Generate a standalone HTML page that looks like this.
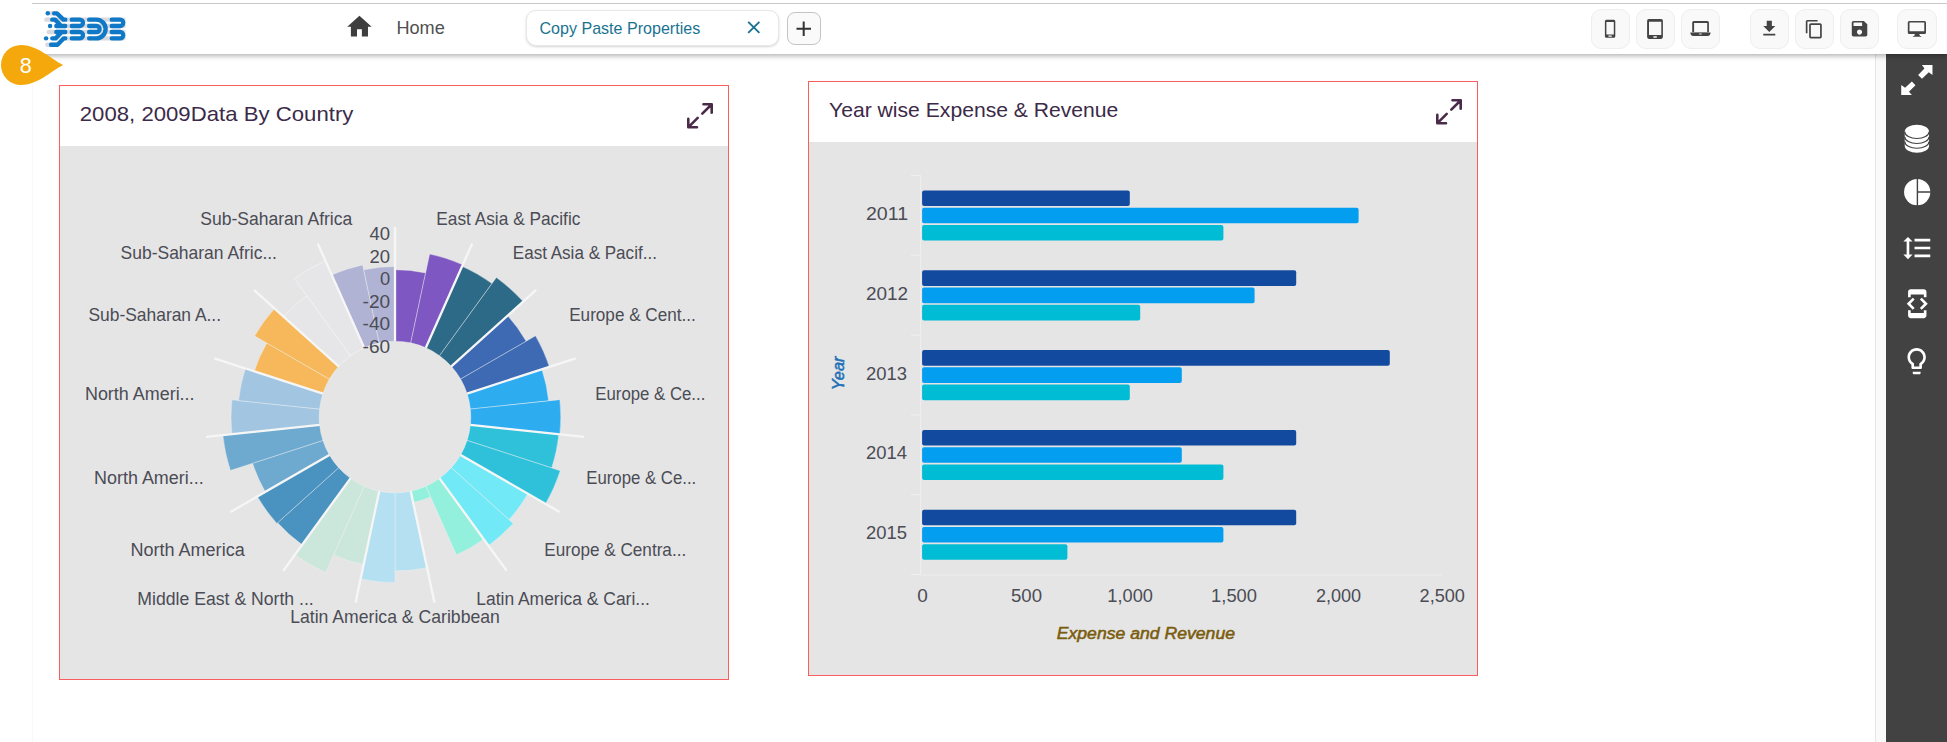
<!DOCTYPE html>
<html lang="en">
<head>
<meta charset="utf-8">
<title>Copy Paste Properties</title>
<style>
html,body{margin:0;padding:0;background:#fff;}
body{width:1947px;height:742px;position:relative;overflow:hidden;font-family:"Liberation Sans",sans-serif;color:#4a4a4a;}
.abs{position:absolute;}
#page{left:32px;top:3px;width:1843px;height:739px;background:#fff;border-left:1px solid #f8f8f8;box-sizing:border-box;}
#hdr{left:32px;top:3px;width:1915px;height:51px;background:#fff;border-top:1px solid #c9c9c9;box-shadow:0 2px 5px rgba(0,0,0,0.30);clip-path:inset(0 0 -12px 0);box-sizing:border-box;}
#scroll{left:1875px;top:54px;width:11px;height:688px;background:#fafafa;border-left:1px solid #e6e6e6;box-sizing:border-box;}
#side{left:1886px;top:54px;width:61px;height:688px;background:#424242;}
.tbtn{position:absolute;top:9px;width:39px;height:39.5px;box-sizing:border-box;border:1px solid #eeeeee;border-radius:10px;background:#f9f9f9;}
.panel{position:absolute;width:670px;height:595px;box-sizing:border-box;border:1px solid #fb5d5d;background:#e5e5e5;}
.panel .ph{position:absolute;left:0;top:0;width:668px;height:60px;background:#fff;}
.ttl{position:absolute;white-space:nowrap;color:#3b2a45;}
svg{position:absolute;left:0;top:0;overflow:visible;}
.pl{font-family:"Liberation Sans",sans-serif;font-size:16.5px;fill:#4b4c55;}
</style>
</head>
<body>
<div id="page" class="abs"></div>

<!-- panels -->
<div class="panel" style="left:59px;top:85px;"><div class="ph"></div></div>
<div class="panel" style="left:808px;top:81px;"><div class="ph"></div></div>

<div id="scroll" class="abs"></div>
<div id="side" class="abs"></div>
<div id="hdr" class="abs"></div>

<!-- header text -->
<div class="abs" id="tab" style="left:526px;top:10px;width:252.5px;height:36px;box-sizing:border-box;border:1px solid #e8e8e8;border-radius:10px;background:#fff;box-shadow:0 1px 2.5px rgba(0,0,0,0.17);"></div>
<div class="abs" id="plus" style="left:787px;top:12px;width:34px;height:33px;box-sizing:border-box;border:1px solid #c4c4c4;border-radius:8px;background:#fafafa;"></div>

<div class="tbtn" style="left:1591px;"></div>
<div class="tbtn" style="left:1636px;"></div>
<div class="tbtn" style="left:1681px;"></div>
<div class="tbtn" style="left:1750px;"></div>
<div class="tbtn" style="left:1795px;"></div>
<div class="tbtn" style="left:1840px;"></div>
<div class="tbtn" style="left:1897px;width:40px;"></div>

<!-- main overlay svg -->
<svg width="1947" height="742" viewBox="0 0 1947 742">
<!-- logo -->
<svg x="38" y="6" width="96" height="46" viewBox="0 0 1549 742" overflow="visible">
 <g fill="none" stroke="#d9d9df" stroke-width="70" stroke-linecap="round">
  <path d="M135 220H1380M175 420H1380M780 322H1380M780 522H1380M150 625H300M200 118H260M420 322H780M420 522H780"/>
 </g>
 <g fill="none" stroke="#0f79c8" stroke-width="70" stroke-linecap="round" stroke-linejoin="round">
  <path d="M260 118H305L410 220H440"/>
  <path d="M230 220H275L375 322H440M295 322H440"/>
  <path d="M295 420H440M380 425L285 522H230"/>
  <path d="M440 522H415L315 625H210"/>
  <path d="M545 220H675A51 51 0 0 1 675 322H545"/>
  <path d="M545 420H675A51 51 0 0 1 675 522H545"/>
  <path d="M825 220H940A151 151 0 0 1 940 522H825"/>
  <path d="M825 322H945A49 49 0 0 1 945 420H825"/>
  <path d="M1190 220H1325A51 51 0 0 1 1325 322H1190"/>
  <path d="M1190 420H1325A51 51 0 0 1 1325 522H1190"/>
 </g>
 <g fill="#0f79c8"><circle cx="158" cy="118" r="36"/><circle cx="195" cy="322" r="36"/><circle cx="130" cy="522" r="36"/></g>
</svg>

<!-- badge 8 -->
<path d="M63 65 C50 58 37 45 21 45 A20 20 0 0 0 21 85 C37 85 50 72 63 65Z" fill="#f5a80c"/>
<text x="25.7" y="72.8" text-anchor="middle" font-family="Liberation Sans, sans-serif" font-size="21.6" fill="#fff">8</text>

<!-- home icon -->
<g transform="translate(344.8,12.1) scale(1.22)" fill="#3e3e3e"><path d="M10 20v-6h4v6h5v-8h3L12 3 2 12h3v8z"/></g>
<!-- tab close -->
<path d="M748.2 21.8L759.4 32.9M759.4 21.8L748.2 32.9" stroke="#1a7391" stroke-width="1.9" fill="none"/>
<!-- plus -->
<path d="M796.5 28.8H811M803.7 21.6V36" stroke="#333" stroke-width="2" fill="none"/>

<!-- expand icons -->
<g fill="none" stroke="#4a2c4a" stroke-width="2.6" stroke-linecap="round" stroke-linejoin="round" id="exp1">
 <path d="M703.5 104.3H711.7V112.8M711 105L702.3 113.7M688.3 118.9V127.3H697M689 126.6L697.7 117.9"/>
</g>
<g fill="none" stroke="#4a2c4a" stroke-width="2.6" stroke-linecap="round" stroke-linejoin="round" transform="translate(749,-4)">
 <path d="M703.5 104.3H711.7V112.8M711 105L702.3 113.7M688.3 118.9V127.3H697M689 126.6L697.7 117.9"/>
</g>

<!-- polar chart -->
<g id="polar">
<path d="M395.00 341.20L395.00 269.70A147.30 147.30 0 0 1 425.63 272.92L410.76 342.86A75.80 75.80 0 0 0 395.00 341.20Z" fill="#7e57c2" stroke="#f4f4f4" stroke-opacity="0.55" stroke-width="0.7"/>
<path d="M410.76 342.86L429.66 253.94A166.70 166.70 0 0 1 462.80 264.71L425.83 347.75A75.80 75.80 0 0 0 410.76 342.86Z" fill="#7e57c2" stroke="#f4f4f4" stroke-opacity="0.55" stroke-width="0.7"/>
<path d="M425.83 347.75L462.11 266.26A165.00 165.00 0 0 1 491.98 283.51L439.55 355.68A75.80 75.80 0 0 0 425.83 347.75Z" fill="#2d6a88" stroke="#f4f4f4" stroke-opacity="0.55" stroke-width="0.7"/>
<path d="M439.55 355.68L496.39 277.44A172.50 172.50 0 0 1 523.19 301.57L451.33 366.28A75.80 75.80 0 0 0 439.55 355.68Z" fill="#2d6a88" stroke="#f4f4f4" stroke-opacity="0.55" stroke-width="0.7"/>
<path d="M451.33 366.28L507.59 315.63A151.50 151.50 0 0 1 526.20 341.25L460.64 379.10A75.80 75.80 0 0 0 451.33 366.28Z" fill="#3d6ab3" stroke="#f4f4f4" stroke-opacity="0.55" stroke-width="0.7"/>
<path d="M460.64 379.10L535.56 335.85A162.30 162.30 0 0 1 549.36 366.85L467.09 393.58A75.80 75.80 0 0 0 460.64 379.10Z" fill="#3d6ab3" stroke="#f4f4f4" stroke-opacity="0.55" stroke-width="0.7"/>
<path d="M467.09 393.58L541.94 369.26A154.50 154.50 0 0 1 548.65 400.85L470.38 409.08A75.80 75.80 0 0 0 467.09 393.58Z" fill="#2eacf0" stroke="#f4f4f4" stroke-opacity="0.55" stroke-width="0.7"/>
<path d="M470.38 409.08L559.89 399.67A165.80 165.80 0 0 1 559.89 434.33L470.38 424.92A75.80 75.80 0 0 0 470.38 409.08Z" fill="#2eacf0" stroke="#f4f4f4" stroke-opacity="0.55" stroke-width="0.7"/>
<path d="M470.38 424.92L558.90 434.23A164.80 164.80 0 0 1 551.73 467.93L467.09 440.42A75.80 75.80 0 0 0 470.38 424.92Z" fill="#2fc1da" stroke="#f4f4f4" stroke-opacity="0.55" stroke-width="0.7"/>
<path d="M467.09 440.42L560.29 470.71A173.80 173.80 0 0 1 545.52 503.90L460.64 454.90A75.80 75.80 0 0 0 467.09 440.42Z" fill="#2fc1da" stroke="#f4f4f4" stroke-opacity="0.55" stroke-width="0.7"/>
<path d="M460.64 454.90L527.93 493.75A153.50 153.50 0 0 1 509.07 519.71L451.33 467.72A75.80 75.80 0 0 0 460.64 454.90Z" fill="#72e9f6" stroke="#f4f4f4" stroke-opacity="0.55" stroke-width="0.7"/>
<path d="M451.33 467.72L513.16 523.39A159.00 159.00 0 0 1 488.46 545.63L439.55 478.32A75.80 75.80 0 0 0 451.33 467.72Z" fill="#72e9f6" stroke="#f4f4f4" stroke-opacity="0.55" stroke-width="0.7"/>
<path d="M439.55 478.32L483.76 539.16A151.00 151.00 0 0 1 456.42 554.95L425.83 486.25A75.80 75.80 0 0 0 439.55 478.32Z" fill="#93f0dc" stroke="#f4f4f4" stroke-opacity="0.55" stroke-width="0.7"/>
<path d="M425.83 486.25L430.59 496.94A87.50 87.50 0 0 1 413.19 502.59L410.76 491.14A75.80 75.80 0 0 0 425.83 486.25Z" fill="#93f0dc" stroke="#f4f4f4" stroke-opacity="0.55" stroke-width="0.7"/>
<path d="M410.76 491.14L427.02 567.63A154.00 154.00 0 0 1 395.00 571.00L395.00 492.80A75.80 75.80 0 0 0 410.76 491.14Z" fill="#b5e0f2" stroke="#f4f4f4" stroke-opacity="0.55" stroke-width="0.7"/>
<path d="M395.00 492.80L395.00 582.50A165.50 165.50 0 0 1 360.59 578.88L379.24 491.14A75.80 75.80 0 0 0 395.00 492.80Z" fill="#b5e0f2" stroke="#f4f4f4" stroke-opacity="0.55" stroke-width="0.7"/>
<path d="M379.24 491.14L363.61 564.70A151.00 151.00 0 0 1 333.58 554.95L364.17 486.25A75.80 75.80 0 0 0 379.24 491.14Z" fill="#cbe6db" stroke="#f4f4f4" stroke-opacity="0.55" stroke-width="0.7"/>
<path d="M364.17 486.25L325.73 572.58A170.30 170.30 0 0 1 294.90 554.78L350.45 478.32A75.80 75.80 0 0 0 364.17 486.25Z" fill="#cbe6db" stroke="#f4f4f4" stroke-opacity="0.55" stroke-width="0.7"/>
<path d="M350.45 478.32L302.13 544.82A158.00 158.00 0 0 1 277.58 522.72L338.67 467.72A75.80 75.80 0 0 0 350.45 478.32Z" fill="#4a93c0" stroke="#f4f4f4" stroke-opacity="0.55" stroke-width="0.7"/>
<path d="M338.67 467.72L276.84 523.39A159.00 159.00 0 0 1 257.30 496.50L329.36 454.90A75.80 75.80 0 0 0 338.67 467.72Z" fill="#4a93c0" stroke="#f4f4f4" stroke-opacity="0.55" stroke-width="0.7"/>
<path d="M329.36 454.90L265.27 491.90A149.80 149.80 0 0 1 252.53 463.29L322.91 440.42A75.80 75.80 0 0 0 329.36 454.90Z" fill="#6ea9d0" stroke="#f4f4f4" stroke-opacity="0.55" stroke-width="0.7"/>
<path d="M322.91 440.42L230.37 470.49A173.10 173.10 0 0 1 222.85 435.09L319.62 424.92A75.80 75.80 0 0 0 322.91 440.42Z" fill="#6ea9d0" stroke="#f4f4f4" stroke-opacity="0.55" stroke-width="0.7"/>
<path d="M319.62 424.92L231.90 434.14A164.00 164.00 0 0 1 231.90 399.86L319.62 409.08A75.80 75.80 0 0 0 319.62 424.92Z" fill="#a2c6e2" stroke="#f4f4f4" stroke-opacity="0.55" stroke-width="0.7"/>
<path d="M319.62 409.08L238.56 400.56A157.30 157.30 0 0 1 245.40 368.39L322.91 393.58A75.80 75.80 0 0 0 319.62 409.08Z" fill="#a2c6e2" stroke="#f4f4f4" stroke-opacity="0.55" stroke-width="0.7"/>
<path d="M322.91 393.58L254.24 371.27A148.00 148.00 0 0 1 266.83 343.00L329.36 379.10A75.80 75.80 0 0 0 322.91 393.58Z" fill="#f6b85a" stroke="#f4f4f4" stroke-opacity="0.55" stroke-width="0.7"/>
<path d="M329.36 379.10L254.70 336.00A162.00 162.00 0 0 1 274.61 308.60L338.67 366.28A75.80 75.80 0 0 0 329.36 379.10Z" fill="#f6b85a" stroke="#f4f4f4" stroke-opacity="0.55" stroke-width="0.7"/>
<path d="M338.67 366.28L283.53 316.63A150.00 150.00 0 0 1 306.83 295.65L350.45 355.68A75.80 75.80 0 0 0 338.67 366.28Z" fill="#e6e6e8" stroke="#f4f4f4" stroke-opacity="0.75" stroke-width="1.0"/>
<path d="M350.45 355.68L294.49 278.66A171.00 171.00 0 0 1 325.45 260.78L364.17 347.75A75.80 75.80 0 0 0 350.45 355.68Z" fill="#e6e6e8" stroke="#f4f4f4" stroke-opacity="0.75" stroke-width="1.0"/>
<path d="M364.17 347.75L331.75 274.94A155.50 155.50 0 0 1 362.67 264.90L379.24 342.86A75.80 75.80 0 0 0 364.17 347.75Z" fill="#b0b3d3" stroke="#f4f4f4" stroke-opacity="0.55" stroke-width="0.7"/>
<path d="M379.24 342.86L363.71 269.79A150.50 150.50 0 0 1 395.00 266.50L395.00 341.20A75.80 75.80 0 0 0 379.24 342.86Z" fill="#b0b3d3" stroke="#f4f4f4" stroke-opacity="0.55" stroke-width="0.7"/>
<line x1="395.00" y1="341.20" x2="395.00" y2="227.00" stroke="#f6f6f6" stroke-width="2.3"/>
<line x1="425.83" y1="347.75" x2="472.28" y2="243.43" stroke="#f6f6f6" stroke-width="2.3"/>
<line x1="451.33" y1="366.28" x2="536.20" y2="289.87" stroke="#f6f6f6" stroke-width="2.3"/>
<line x1="467.09" y1="393.58" x2="575.70" y2="358.29" stroke="#f6f6f6" stroke-width="2.3"/>
<line x1="470.38" y1="424.92" x2="583.96" y2="436.86" stroke="#f6f6f6" stroke-width="2.3"/>
<line x1="460.64" y1="454.90" x2="559.54" y2="512.00" stroke="#f6f6f6" stroke-width="2.3"/>
<line x1="439.55" y1="478.32" x2="506.68" y2="570.71" stroke="#f6f6f6" stroke-width="2.3"/>
<line x1="410.76" y1="491.14" x2="434.50" y2="602.85" stroke="#f6f6f6" stroke-width="2.3"/>
<line x1="379.24" y1="491.14" x2="355.50" y2="602.85" stroke="#f6f6f6" stroke-width="2.3"/>
<line x1="350.45" y1="478.32" x2="283.32" y2="570.71" stroke="#f6f6f6" stroke-width="2.3"/>
<line x1="329.36" y1="454.90" x2="230.46" y2="512.00" stroke="#f6f6f6" stroke-width="2.3"/>
<line x1="319.62" y1="424.92" x2="206.04" y2="436.86" stroke="#f6f6f6" stroke-width="2.3"/>
<line x1="322.91" y1="393.58" x2="214.30" y2="358.29" stroke="#f6f6f6" stroke-width="2.3"/>
<line x1="338.67" y1="366.28" x2="253.80" y2="289.87" stroke="#f6f6f6" stroke-width="2.3"/>
<line x1="364.17" y1="347.75" x2="317.72" y2="243.43" stroke="#f6f6f6" stroke-width="2.3"/>
</g>

<!-- bar chart -->
<g id="bars">
<rect x="922.1" y="190.50" width="207.70" height="15.6" rx="2" fill="#124a9f"/>
<rect x="922.1" y="207.75" width="436.50" height="15.6" rx="2" fill="#049ef0"/>
<rect x="922.1" y="225.00" width="301.30" height="15.6" rx="2" fill="#00bcd5"/>
<rect x="922.1" y="270.30" width="374.10" height="15.6" rx="2" fill="#124a9f"/>
<rect x="922.1" y="287.55" width="332.50" height="15.6" rx="2" fill="#049ef0"/>
<rect x="922.1" y="304.80" width="218.10" height="15.6" rx="2" fill="#00bcd5"/>
<rect x="922.1" y="350.10" width="467.70" height="15.6" rx="2" fill="#124a9f"/>
<rect x="922.1" y="367.35" width="259.70" height="15.6" rx="2" fill="#049ef0"/>
<rect x="922.1" y="384.60" width="207.70" height="15.6" rx="2" fill="#00bcd5"/>
<rect x="922.1" y="429.90" width="374.10" height="15.6" rx="2" fill="#124a9f"/>
<rect x="922.1" y="447.15" width="259.70" height="15.6" rx="2" fill="#049ef0"/>
<rect x="922.1" y="464.40" width="301.30" height="15.6" rx="2" fill="#00bcd5"/>
<rect x="922.1" y="509.70" width="374.10" height="15.6" rx="2" fill="#124a9f"/>
<rect x="922.1" y="526.95" width="301.30" height="15.6" rx="2" fill="#049ef0"/>
<rect x="922.1" y="544.20" width="145.30" height="15.6" rx="2" fill="#00bcd5"/>
<line x1="911" y1="175.50" x2="920.5" y2="175.50" stroke="#efefef" stroke-width="1"/>
<line x1="911" y1="255.30" x2="920.5" y2="255.30" stroke="#efefef" stroke-width="1"/>
<line x1="911" y1="335.10" x2="920.5" y2="335.10" stroke="#efefef" stroke-width="1"/>
<line x1="911" y1="414.90" x2="920.5" y2="414.90" stroke="#efefef" stroke-width="1"/>
<line x1="911" y1="494.70" x2="920.5" y2="494.70" stroke="#efefef" stroke-width="1"/>
<line x1="911" y1="574.50" x2="920.5" y2="574.50" stroke="#efefef" stroke-width="1"/>
<line x1="920.5" y1="175" x2="920.5" y2="575" stroke="#eeeeee" stroke-width="1.2"/>
<line x1="920" y1="575" x2="1442" y2="575" stroke="#ededed" stroke-width="1"/>
</g>

<!-- texts -->
<g id="texts">
<text transform="translate(436.27,224.90) scale(0.9826,1)" font-family='"Liberation Sans", sans-serif' font-size="17.6" font-style="normal" font-weight="normal" fill="#4b4c55">East Asia &amp; Pacific</text>
<text transform="translate(512.78,258.90) scale(0.9694,1)" font-family='"Liberation Sans", sans-serif' font-size="17.6" font-style="normal" font-weight="normal" fill="#4b4c55">East Asia &amp; Pacif...</text>
<text transform="translate(569.18,320.80) scale(0.9736,1)" font-family='"Liberation Sans", sans-serif' font-size="17.6" font-style="normal" font-weight="normal" fill="#4b4c55">Europe &amp; Cent...</text>
<text transform="translate(595.30,399.80) scale(0.9541,1)" font-family='"Liberation Sans", sans-serif' font-size="17.6" font-style="normal" font-weight="normal" fill="#4b4c55">Europe &amp; Ce...</text>
<text transform="translate(586.20,483.50) scale(0.9541,1)" font-family='"Liberation Sans", sans-serif' font-size="17.6" font-style="normal" font-weight="normal" fill="#4b4c55">Europe &amp; Ce...</text>
<text transform="translate(544.28,556.00) scale(0.9741,1)" font-family='"Liberation Sans", sans-serif' font-size="17.6" font-style="normal" font-weight="normal" fill="#4b4c55">Europe &amp; Centra...</text>
<text transform="translate(476.26,604.70) scale(0.9925,1)" font-family='"Liberation Sans", sans-serif' font-size="17.6" font-style="normal" font-weight="normal" fill="#4b4c55">Latin America &amp; Cari...</text>
<text transform="translate(290.15,622.90) scale(1.0021,1)" font-family='"Liberation Sans", sans-serif' font-size="17.6" font-style="normal" font-weight="normal" fill="#4b4c55">Latin America &amp; Caribbean</text>
<text transform="translate(137.35,604.70) scale(1.0028,1)" font-family='"Liberation Sans", sans-serif' font-size="17.6" font-style="normal" font-weight="normal" fill="#4b4c55">Middle East &amp; North ...</text>
<text transform="translate(130.42,556.00) scale(1.0255,1)" font-family='"Liberation Sans", sans-serif' font-size="17.6" font-style="normal" font-weight="normal" fill="#4b4c55">North America</text>
<text transform="translate(94.03,483.50) scale(1.0194,1)" font-family='"Liberation Sans", sans-serif' font-size="17.6" font-style="normal" font-weight="normal" fill="#4b4c55">North Ameri...</text>
<text transform="translate(84.93,399.80) scale(1.0194,1)" font-family='"Liberation Sans", sans-serif' font-size="17.6" font-style="normal" font-weight="normal" fill="#4b4c55">North Ameri...</text>
<text transform="translate(88.45,320.80) scale(0.9897,1)" font-family='"Liberation Sans", sans-serif' font-size="17.6" font-style="normal" font-weight="normal" fill="#4b4c55">Sub-Saharan A...</text>
<text transform="translate(120.55,258.90) scale(0.9941,1)" font-family='"Liberation Sans", sans-serif' font-size="17.6" font-style="normal" font-weight="normal" fill="#4b4c55">Sub-Saharan Afric...</text>
<text transform="translate(200.35,224.90) scale(0.9964,1)" font-family='"Liberation Sans", sans-serif' font-size="17.6" font-style="normal" font-weight="normal" fill="#4b4c55">Sub-Saharan Africa</text>
<text transform="translate(369.55,240.30) scale(1.0513,1)" font-family='"Liberation Sans", sans-serif' font-size="17.6" font-style="normal" font-weight="normal" fill="#4b4c55">40</text>
<text transform="translate(369.55,262.80) scale(1.0513,1)" font-family='"Liberation Sans", sans-serif' font-size="17.6" font-style="normal" font-weight="normal" fill="#4b4c55">20</text>
<text transform="translate(379.95,285.30) scale(1.0400,1)" font-family='"Liberation Sans", sans-serif' font-size="17.6" font-style="normal" font-weight="normal" fill="#4b4c55">0</text>
<text transform="translate(362.55,307.80) scale(1.0841,1)" font-family='"Liberation Sans", sans-serif' font-size="17.6" font-style="normal" font-weight="normal" fill="#4b4c55">-20</text>
<text transform="translate(362.55,330.30) scale(1.0841,1)" font-family='"Liberation Sans", sans-serif' font-size="17.6" font-style="normal" font-weight="normal" fill="#4b4c55">-40</text>
<text transform="translate(362.55,352.80) scale(1.0841,1)" font-family='"Liberation Sans", sans-serif' font-size="17.6" font-style="normal" font-weight="normal" fill="#4b4c55">-60</text>
<text transform="translate(865.95,220.00) scale(1.1148,1)" font-family='"Liberation Sans", sans-serif' font-size="17.6" font-style="normal" font-weight="normal" fill="#4b4c55">2011</text>
<text transform="translate(865.95,299.80) scale(1.0768,1)" font-family='"Liberation Sans", sans-serif' font-size="17.6" font-style="normal" font-weight="normal" fill="#4b4c55">2012</text>
<text transform="translate(865.95,379.60) scale(1.0494,1)" font-family='"Liberation Sans", sans-serif' font-size="17.6" font-style="normal" font-weight="normal" fill="#4b4c55">2013</text>
<text transform="translate(865.95,459.40) scale(1.0494,1)" font-family='"Liberation Sans", sans-serif' font-size="17.6" font-style="normal" font-weight="normal" fill="#4b4c55">2014</text>
<text transform="translate(865.95,539.20) scale(1.0494,1)" font-family='"Liberation Sans", sans-serif' font-size="17.6" font-style="normal" font-weight="normal" fill="#4b4c55">2015</text>
<text transform="translate(917.35,602.40) scale(1.0800,1)" font-family='"Liberation Sans", sans-serif' font-size="17.6" font-style="normal" font-weight="normal" fill="#4b4c55">0</text>
<text transform="translate(1011.05,602.40) scale(1.0551,1)" font-family='"Liberation Sans", sans-serif' font-size="17.6" font-style="normal" font-weight="normal" fill="#4b4c55">500</text>
<text transform="translate(1107.31,602.40) scale(1.0360,1)" font-family='"Liberation Sans", sans-serif' font-size="17.6" font-style="normal" font-weight="normal" fill="#4b4c55">1,000</text>
<text transform="translate(1211.11,602.40) scale(1.0430,1)" font-family='"Liberation Sans", sans-serif' font-size="17.6" font-style="normal" font-weight="normal" fill="#4b4c55">1,500</text>
<text transform="translate(1315.95,602.40) scale(1.0262,1)" font-family='"Liberation Sans", sans-serif' font-size="17.6" font-style="normal" font-weight="normal" fill="#4b4c55">2,000</text>
<text transform="translate(1419.55,602.40) scale(1.0307,1)" font-family='"Liberation Sans", sans-serif' font-size="17.6" font-style="normal" font-weight="normal" fill="#4b4c55">2,500</text>
<text transform="translate(1056.75,639.30) scale(1.0245,1)" font-family='"Liberation Sans", sans-serif' font-size="17.2" font-style="italic" font-weight="normal" fill="#7a5c0d" stroke="#7a5c0d" stroke-width="0.55" stroke-linejoin="round">Expense and Revenue</text>
<text transform="translate(844.40,390.25) rotate(-90) scale(0.9542,1)" font-family='"Liberation Sans", sans-serif' font-size="17.2" font-style="italic" font-weight="normal" fill="#1f72b8" stroke="#1f72b8" stroke-width="0.55" stroke-linejoin="round">Year</text>
<text transform="translate(79.74,120.50) scale(1.1089,1)" font-family='"Liberation Sans", sans-serif' font-size="20" font-style="normal" font-weight="normal" fill="#3c2a48">2008, 2009Data By Country</text>
<text transform="translate(829.05,116.50) scale(1.0572,1)" font-family='"Liberation Sans", sans-serif' font-size="20" font-style="normal" font-weight="normal" fill="#3c2a48">Year wise Expense &amp; Revenue</text>
<text transform="translate(396.42,34.00) scale(1.0322,1)" font-family='"Liberation Sans", sans-serif' font-size="17.6" font-style="normal" font-weight="normal" fill="#505050">Home</text>
<text transform="translate(539.45,33.60) scale(0.9928,1)" font-family='"Liberation Sans", sans-serif' font-size="16.2" font-style="normal" font-weight="normal" fill="#1a7391">Copy Paste Properties</text>
</g>
<!-- toolbar icons -->
<g fill="#444">
 <!-- mobile -->
 <path fill-rule="evenodd" d="M1606.4 19.8h7.4a1.5 1.5 0 0 1 1.5 1.5v15a1.5 1.5 0 0 1 -1.5 1.5h-7.4a1.5 1.5 0 0 1 -1.5 -1.5v-15a1.5 1.5 0 0 1 1.5 -1.5zM1606.4 22.1v12.3h7.4v-12.3zM1608.9 35.4h2.4a.6 .6 0 0 1 0 1.3h-2.4a.6 .6 0 0 1 0 -1.3z"/>
 <!-- tablet -->
 <path fill-rule="evenodd" d="M1648.9 18.9h12.2a1.8 1.8 0 0 1 1.8 1.8v16.4a1.8 1.8 0 0 1 -1.8 1.8h-12.2a1.8 1.8 0 0 1 -1.8 -1.8v-16.4a1.8 1.8 0 0 1 1.8 -1.8zM1649 21.8v13.2h12.3v-13.2zM1653.9 36.3h2.4a.6 .6 0 0 1 0 1.4h-2.4a.6 .6 0 0 1 0 -1.4z"/>
 <!-- laptop -->
 <path fill-rule="evenodd" d="M1693.7 20.9h13.7a1.5 1.5 0 0 1 1.5 1.5v9.9h-16.7v-9.9a1.5 1.5 0 0 1 1.5 -1.5zM1694.1 23v9h13.1v-9z"/>
 <path fill-rule="evenodd" d="M1690.4 32.6h20.1v.8q-.3 2.4 -2.6 2.6h-14.9q-2.3 -.2 -2.6 -2.6zM1699.2 33.5h2.4v1.1h-2.4z"/>
 <!-- download (get_app) -->
 <g transform="translate(1759,18.3) scale(0.857)"><path d="M19 9h-4V3H9v6H5l7 7 7-7zM5 18v2h14v-2H5z"/></g>
 <!-- copy -->
 <g transform="translate(1804.1,19.06) scale(0.842)"><path d="M16 1H4c-1.1 0-2 .9-2 2v14h2V3h12V1zm3 4H8c-1.1 0-2 .9-2 2v14c0 1.1.9 2 2 2h11c1.1 0 2-.9 2-2V7c0-1.1-.9-2-2-2zm0 16H8V7h11v14z"/></g>
 <!-- save -->
 <g transform="translate(1849.2,18.3) scale(0.861)"><path d="M17 3H5c-1.11 0-2 .9-2 2v14c0 1.1.89 2 2 2h14c1.1 0 2-.9 2-2V7l-4-4zm-5 16c-1.66 0-3-1.34-3-3s1.34-3 3-3 3 1.34 3 3-1.34 3-3 3zm3-10H5V5h10v4z"/></g>
 <!-- desktop -->
 <path fill-rule="evenodd" d="M1909.3 20.9h15.2a1.5 1.5 0 0 1 1.5 1.5v10a1.5 1.5 0 0 1 -1.5 1.5h-15.2a1.5 1.5 0 0 1 -1.5 -1.5v-10a1.5 1.5 0 0 1 1.5 -1.5zM1909.5 22.5v8.8h14.8v-8.8z"/>
 <path d="M1915 33.8h4.2l.8 2.1h1a.45 .45 0 0 1 0 .9h-7.8a.45 .45 0 0 1 0 -.9h1z"/>
</g>
<!-- sidebar icons -->
<g fill="#fff">
 <path d="M1921.97 65h10.5v9.9l-3.67 -2.67l-6.83 6.52l-3.85 -3.86l6.34 -6.34z"/>
 <path d="M1901.22 84.97v10.08h10.67l-2.96 -3.26l6.52 -6.52l-3.56 -3.68l-6.81 6.05z"/>
 <!-- database -->
 <path d="M1904.75 131.6a12.15 6.8 0 0 1 24.3 0v14.4a12.15 6.8 0 0 1 -24.3 0z"/>
 <g fill="none" stroke="#424242" stroke-width="1.15">
  <path d="M1904.75 131.7a12.15 6.8 0 0 0 24.3 0M1904.75 136.7a12.15 6.8 0 0 0 24.3 0M1904.75 141.4a12.15 6.8 0 0 0 24.3 0"/>
 </g>
 <!-- pie -->
 <circle cx="1917.2" cy="192.1" r="13.15"/>
 <path d="M1917.4 178v28M1917.4 192h14" stroke="#424242" stroke-width="1.4" fill="none"/>
 <!-- line spacing -->
 <g transform="translate(1901.4,232.3) scale(1.312)"><path d="M6 7h2.5L5 3.5 1.5 7H4v10H1.5L5 20.5 8.5 17H6V7zm4-2v2h12V5H10zm0 14h12v-2H10v2zm0-6h12v-2H10v2z"/></g>
 <!-- developer mode -->
 <g transform="translate(1901.5,288) scale(1.314)"><path d="M7 5h10v2h2V3c0-1.1-.9-1.99-2-1.99L7 1c-1.1 0-2 .9-2 2v4h2V5zm8.41 11.59L20 12l-4.59-4.59L14 8.83 17.17 12 14 15.17l1.41 1.42zM10 15.17L6.83 12 10 8.83 8.59 7.41 4 12l4.59 4.59L10 15.17zM17 19H7v-2H5v4c0 1.1.9 2 2 2h10c1.1 0 2-.9 2-2v-4h-2v2z"/></g>
 <!-- bulb -->
 <g transform="translate(1900.9,345.4) scale(1.314)"><path d="M9 21c0 .55.45 1 1 1h4c.55 0 1-.45 1-1v-1H9v1zm3-19C8.14 2 5 5.14 5 9c0 2.38 1.19 4.47 3 5.74V17c0 .55.45 1 1 1h6c.55 0 1-.45 1-1v-2.26c1.81-1.27 3-3.36 3-5.74 0-3.86-3.14-7-7-7zm2.85 11.1l-.85.6V16h-4v-2.3l-.85-.6C7.8 12.16 7 10.63 7 9c0-2.76 2.24-5 5-5s5 2.24 5 5c0 1.63-.8 3.16-2.15 4.1z"/></g>
</g>

</svg>
</body>
</html>
